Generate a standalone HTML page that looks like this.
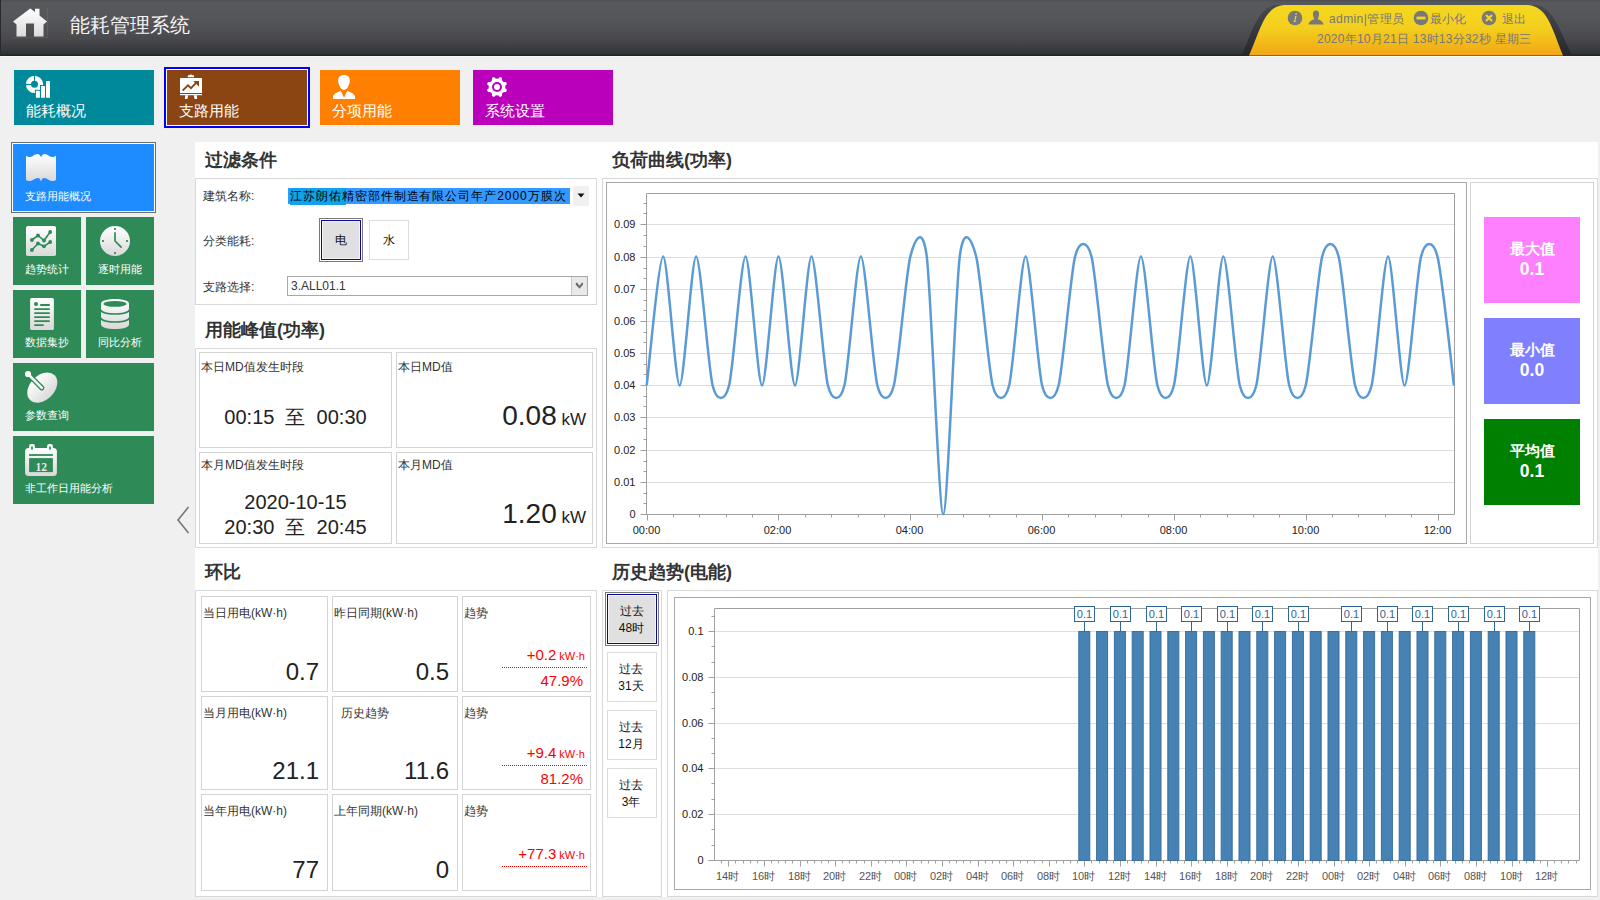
<!DOCTYPE html><html><head><meta charset="utf-8"><style>
*{box-sizing:border-box;margin:0;padding:0}
html,body{width:1600px;height:900px;overflow:hidden;background:#f0f0f0;font-family:"Liberation Sans",sans-serif;color:#333}
.a{position:absolute}
.hdr{left:0;top:0;width:1600px;height:56px;background:linear-gradient(#4f5054 0px,#58595d 3px,#56575b 15px,#4f5054 30px,#48484c 40px,#3b3d40 48px,#313436 54px,#222425 55px,#222425 56px)}
.ttl{left:70px;top:12px;font-size:20px;color:#f4f4f4;line-height:26px;letter-spacing:0px}
.tile{color:#fff;font-size:15px;line-height:18px}
.tile span{position:absolute;left:12px;bottom:5px;white-space:nowrap}
.st{color:#fff;font-size:11px;line-height:13px}
.st span{position:absolute;left:12px;bottom:9px;white-space:nowrap}
.pt{font-size:18px;font-weight:bold;color:#333;line-height:22px}
.bx{border:1px solid #d9d9d9;background:#fff}
.lb{font-size:12px;line-height:14px;color:#333;white-space:nowrap}
.card{border:1px solid #d4d4d4;background:#fff}
.red{color:#ff0000}
</style></head><body>
<div class="a hdr"></div>
<div class="a" style="left:0;top:0;width:1px;height:56px;background:#2a2a2a"></div>
<div class="a" style="left:0;top:56px;width:1600px;height:1px;background:#f8f8f8"></div>
<svg class="a" style="left:12px;top:8px" width="36" height="30" viewBox="0 0 36 30">
<defs><linearGradient id="hg" x1="0" y1="0" x2="0" y2="1"><stop offset="0" stop-color="#ffffff"/><stop offset="1" stop-color="#dcdcdc"/></linearGradient></defs>
<path d="M1,13.5 L18.3,0.5 L23,4 L23,0.8 L27.5,0.8 L27.5,7.6 L35,13.5 L31.5,16.5 L31.5,28.5 L22,28.5 L22,15.5 L14,15.5 L14,28.5 L4.5,28.5 L4.5,16.5 Z" fill="url(#hg)"/>
</svg>
<div class="a" style="left:47px;top:8px;width:1px;height:30px;background:rgba(255,255,255,0.07)"></div><div class="a" style="left:12px;top:37px;width:36px;height:1px;background:rgba(255,255,255,0.07)"></div>
<div class="a ttl">能耗管理系统</div>
<svg class="a" style="left:1238px;top:0" width="340" height="56" viewBox="0 0 340 56">
<defs><linearGradient id="yg" x1="0" y1="0" x2="0" y2="1"><stop offset="0" stop-color="#f5d81f"/><stop offset="0.45" stop-color="#f4cf1e"/><stop offset="1" stop-color="#f1a616"/></linearGradient>
<linearGradient id="sg" x1="0" y1="0" x2="0" y2="1"><stop offset="0" stop-color="#4a4b4f"/><stop offset="1" stop-color="#26272a"/></linearGradient></defs>
<path d="M4,55.5 C14,30 20,10 36,5 L300,5 C316,10 322,30 334,55.5 Z" fill="url(#sg)" />
<path d="M11,55.5 C24,25 27,7 46,5 L290,5 C309,7 313,25 325,55.5 Z" fill="url(#yg)"/>
</svg>
<svg class="a" style="left:1287px;top:10px" width="16" height="16" viewBox="0 0 16 16"><circle cx="8" cy="8" r="7.3" fill="#787878"/><path d="M8.6,3.3 l1.4,0 l-0.4,1.5 l-1.4,0z M8.2,6 l1.4,0 l-1.4,5.2 l1,0 l-0.2,0.8 l-2.6,0 l0.2,-0.8 l0.5,0 l1.1,-4.4 l-0.6,0z" fill="#f5d41f"/></svg>
<svg class="a" style="left:1308px;top:10px" width="16" height="15" viewBox="0 0 16 15"><path d="M8,0.5 C10.5,0.5 11.3,2.5 11,5 C10.8,7 10,8.5 9.6,9 C11.5,10 15,11 15.5,14.5 L0.5,14.5 C1,11 4.5,10 6.4,9 C6,8.5 5.2,7 5,5 C4.7,2.5 5.5,0.5 8,0.5Z" fill="#787878"/></svg>
<div class="a lb" style="left:1329px;top:12px;font-size:12px;color:#787878;line-height:14px;letter-spacing:0.4px">admin|管理员</div>
<svg class="a" style="left:1413px;top:10px" width="16" height="16" viewBox="0 0 16 16"><circle cx="8" cy="8" r="7.3" fill="#787878"/><rect x="3.5" y="6.6" width="9" height="2.8" fill="#f5d41f"/></svg>
<div class="a lb" style="left:1430px;top:12px;font-size:12px;color:#787878;line-height:14px">最小化</div>
<svg class="a" style="left:1481px;top:10px" width="16" height="16" viewBox="0 0 16 16"><circle cx="8" cy="8" r="7.3" fill="#787878"/><path d="M5,5 L11,11 M11,5 L5,11" stroke="#f5d41f" stroke-width="2.2"/></svg>
<div class="a lb" style="left:1502px;top:12px;font-size:12px;color:#787878;line-height:14px">退出</div>
<div class="a lb" style="left:1317px;top:32px;font-size:12px;color:#787878;line-height:14px;letter-spacing:0.25px">2020年10月21日 13时13分32秒 星期三</div>
<div class="a tile" style="left:14px;top:70px;width:140px;height:55px;background:#00889b"><span>能耗概况</span></div>
<div class="a" style="left:164px;top:67px;width:146px;height:61px;border:2px solid #0000ff;background:#fff"></div>
<div class="a tile" style="left:167px;top:70px;width:140px;height:55px;background:#8b4513"><span>支路用能</span></div>
<div class="a tile" style="left:320px;top:70px;width:140px;height:55px;background:#ff8000"><span>分项用能</span></div>
<div class="a tile" style="left:473px;top:70px;width:140px;height:55px;background:#bb00bb"><span>系统设置</span></div>
<div class="a" style="left:11px;top:142px;width:145px;height:71px;border:1px solid #6e6e6e;background:#fff"></div>
<div class="a st" style="left:13px;top:144px;width:141px;height:67px;background:#1e8cff"><span style="left:12px;bottom:8px">支路用能概况</span></div>
<div class="a st" style="left:13px;top:217px;width:68px;height:68px;background:#2e8b57"><span>趋势统计</span></div>
<div class="a st" style="left:86px;top:217px;width:68px;height:68px;background:#2e8b57"><span>逐时用能</span></div>
<div class="a st" style="left:13px;top:290px;width:68px;height:68px;background:#2e8b57"><span>数据集抄</span></div>
<div class="a st" style="left:86px;top:290px;width:68px;height:68px;background:#2e8b57"><span>同比分析</span></div>
<div class="a st" style="left:13px;top:363px;width:141px;height:68px;background:#2e8b57"><span>参数查询</span></div>
<div class="a st" style="left:13px;top:436px;width:141px;height:68px;background:#2e8b57"><span>非工作日用能分析</span></div>
<svg class="a" style="left:0;top:0" width="1600" height="900" viewBox="0 0 1600 900"><defs><linearGradient id="wg" x1="0" y1="0" x2="0" y2="1"><stop offset="0" stop-color="#ffffff"/><stop offset="1" stop-color="#d9d9d9"/></linearGradient></defs><path fill-rule="evenodd" fill="#fff" d="M34.5,75.7 A8.6,8.6 0 1 0 34.5,92.9 A8.6,8.6 0 1 0 34.5,75.7Z M34.5,80.8 A3.5,3.5 0 1 1 34.5,87.8 A3.5,3.5 0 1 1 34.5,80.8Z"/><rect x="34" y="75" width="1" height="6" fill="#00889b"/><rect x="25" y="83.9" width="6" height="1.2" fill="#00889b"/><rect x="34.9" y="89.8" width="6" height="9" fill="#00889b"/><rect x="40" y="85" width="6" height="14" fill="#00889b"/><rect x="35.9" y="90.8" width="4" height="7" rx="0.6" fill="#fff"/><rect x="41" y="86" width="4" height="11.8" rx="0.6" fill="#fff"/><rect x="46" y="81" width="4" height="16.8" rx="0.6" fill="#fff"/><rect x="187.8" y="75.3" width="6.2" height="1.9" fill="#fff"/><ellipse cx="190.9" cy="75.4" rx="1.4" ry="0.8" fill="#fff"/><rect x="180" y="78" width="22" height="15" rx="0.6" fill="#fff"/><rect x="180" y="94" width="22" height="1.2" fill="#fff"/><path d="M185.2,95.2 L188.2,95.2 L187.4,99 L184.9,99Z M193.8,95.2 L196.8,95.2 L197.1,99 L194.6,99Z" fill="#fff"/><path d="M182.6,90.6 L188,85.3 L191,88.1 L196.3,82.7" stroke="#8b4513" stroke-width="1.9" fill="none"/><path d="M193.2,81 L199,81 L199,86.8Z" fill="#8b4513"/><path fill="#fff" d="M344,75 C348.2,75 350,77.6 349.8,81 C349.7,83 349.3,84.6 348.5,85.6 C347.5,88.5 346,90 344,90 C342,90 340.5,88.5 339.5,85.6 C338.7,84.6 338.3,83 338.2,81 C338,77.6 339.8,75 344,75Z"/><path fill="#fff" d="M333,96.5 C333.5,94 338,91.8 340.8,91 L344,97.8 L347.2,91 C350,91.8 354.5,94 355,96.5 L355,99 L333,99Z"/><circle cx="497.0" cy="87.0" r="10.4" fill="#fff"/><circle cx="497.00" cy="76.00" r="2.8" fill="#bb00bb"/><circle cx="504.78" cy="79.22" r="2.8" fill="#bb00bb"/><circle cx="508.00" cy="87.00" r="2.8" fill="#bb00bb"/><circle cx="504.78" cy="94.78" r="2.8" fill="#bb00bb"/><circle cx="497.00" cy="98.00" r="2.8" fill="#bb00bb"/><circle cx="489.22" cy="94.78" r="2.8" fill="#bb00bb"/><circle cx="486.00" cy="87.00" r="2.8" fill="#bb00bb"/><circle cx="489.22" cy="79.22" r="2.8" fill="#bb00bb"/><circle cx="497.0" cy="87.0" r="5" fill="#bb00bb"/><circle cx="497.0" cy="87.0" r="3" fill="#fff"/><path fill="url(#wg)" d="M26,155.8 C28,157.5 31,157.3 33,156 C35,154.5 37,153.8 38.5,154.2 C40,154.7 40.5,156.5 41,157 C41.5,156.5 42,154.7 43.5,154.2 C45,153.8 47,154.5 49,156 C51,157.3 54,157.5 56,155.8 L56,180 C54,181.5 51,181.3 49,180 C47,178.5 45,177.8 43.5,178 C42,178.3 41.5,180.5 41,181.2 C40.5,180.5 40,178.3 38.5,178 C37,177.8 35,178.5 33,180 C31,181.3 28,181.5 26,180 Z"/><rect x="26" y="226" width="30" height="30" rx="1.8" fill="url(#wg)"/><g stroke="#2e8b57" stroke-width="1.6" fill="none"><path d="M31.9,240 L38,235.5 L44,240.5 L50.2,232"/><path d="M31.9,250 L38,243.5 L44,246.3 L50.2,242"/></g><g fill="#2e8b57"><circle cx="31.9" cy="240" r="1.9"/><circle cx="38" cy="235.5" r="1.9"/><circle cx="44" cy="240.5" r="1.9"/><circle cx="50.2" cy="232" r="1.9"/><circle cx="31.9" cy="250" r="1.9"/><circle cx="38" cy="243.5" r="1.9"/><circle cx="44" cy="246.3" r="1.9"/><circle cx="50.2" cy="242" r="1.9"/></g><circle cx="115" cy="241" r="15" fill="url(#wg)"/><g fill="#2e8b57" opacity="0.85"><rect x="114" y="228" width="2" height="2"/><rect x="114" y="252" width="2" height="2"/><rect x="102" y="240" width="2" height="2"/><rect x="126" y="240" width="2" height="2"/></g><path d="M115,232.3 L115,241 L121.6,247.6" stroke="#2e8b57" stroke-width="1.7" fill="none"/><rect x="30.1" y="298.1" width="23.8" height="31.8" rx="1.5" fill="url(#wg)"/><g fill="#2e8b57"><circle cx="36" cy="303.9" r="2"/><rect x="40.2" y="304.1" width="9.6" height="1.8" rx="0.5"/><rect x="34.2" y="308.3" width="15.6" height="1.8" rx="0.5"/><rect x="34.2" y="312.3" width="15.6" height="1.8" rx="0.5"/><rect x="34.2" y="316.3" width="15.6" height="1.8" rx="0.5"/><rect x="34.2" y="320.3" width="15.6" height="1.8" rx="0.5"/><rect x="34.2" y="324.3" width="9.6" height="1.8" rx="0.5"/></g><path fill="url(#wg)" d="M101,303.6 C101,297.6 129,297.6 129,303.6 L129,324.4 C129,330.6 101,330.6 101,324.4 Z"/><ellipse cx="115" cy="303.9" rx="11.6" ry="2.9" fill="#2e8b57"/><g stroke="#2e8b57" stroke-width="1.6" fill="none"><path d="M101,309.8 C101,315.4 129,315.4 129,309.8"/><path d="M101,317.8 C101,323.4 129,323.4 129,317.8"/></g><ellipse cx="42.3" cy="387.6" rx="17.4" ry="12.2" transform="rotate(-45 42.3 387.6)" fill="url(#wg)"/><path d="M28,374 L41.8,387.8" stroke="#2e8b57" stroke-width="5.2" stroke-linecap="round"/><path d="M28,374 L41.8,387.8" stroke="#f2f2f2" stroke-width="2.6" stroke-linecap="round"/><circle cx="28" cy="374" r="3.1" fill="#fafafa"/><rect x="25.1" y="447.9" width="31.8" height="28" rx="3.5" fill="url(#wg)"/><rect x="29.1" y="454.1" width="23.8" height="1.8" fill="#2e8b57"/><rect x="29.1" y="458.1" width="23.8" height="14" fill="#2e8b57"/><rect x="29.1" y="444.1" width="5.8" height="6.9" rx="2" fill="#f8f8f8"/><rect x="31.1" y="446.6" width="1.8" height="2.9" fill="#2e8b57"/><rect x="47.1" y="444.1" width="5.8" height="6.9" rx="2" fill="#f8f8f8"/><rect x="49.1" y="446.6" width="1.8" height="2.9" fill="#2e8b57"/><text x="41.2" y="470.5" font-size="11.5" font-weight="bold" text-anchor="middle" fill="#e8e8e8" font-family="Liberation Serif">12</text></svg>
<svg class="a" style="left:175px;top:505px" width="16" height="30" viewBox="0 0 16 30"><path d="M13.5,2 L3,15 L13.5,28" stroke="#777" stroke-width="1.6" fill="none"/></svg>
<div class="a" style="left:195px;top:142px;width:1403px;height:755px;background:#fff"></div>
<div class="a pt" style="left:205px;top:149px">过滤条件</div>
<div class="a pt" style="left:612px;top:149px">负荷曲线(功率)</div>
<div class="a pt" style="left:205px;top:319px">用能峰值(功率)</div>
<div class="a pt" style="left:205px;top:561px">环比</div>
<div class="a pt" style="left:612px;top:561px">历史趋势(电能)</div>
<div class="a bx" style="left:195px;top:178px;width:402px;height:127px"></div>
<div class="a lb" style="left:203px;top:189px">建筑名称:</div>
<div class="a lb" style="left:203px;top:234px">分类能耗:</div>
<div class="a lb" style="left:203px;top:280px">支路选择:</div>
<div class="a" style="left:288px;top:188px;width:282px;height:16px;background:#3399ff"></div>
<div class="a" style="left:290px;top:188px;width:56px;height:17px;background:#12a2ec"></div>
<div class="a lb" style="left:290px;top:189px;color:#000;letter-spacing:0.95px">江苏朗佑精密部件制造有限公司年产2000万膜次</div>
<div class="a" style="left:573px;top:186px;width:16px;height:20px;background:#f0f0f0"></div>
<svg class="a" style="left:577px;top:193px" width="8" height="5"><path d="M0.5,0.5 L7.5,0.5 L4,4.5Z" fill="#111"/></svg>
<div class="a" style="left:319px;top:218px;width:44px;height:44px;border:1px solid #7a7a7a;background:#fff"></div>
<div class="a lb" style="left:321px;top:220px;width:40px;height:40px;border:1px solid #0a0a9a;box-shadow:inset 0 0 0 1px #f4f4f4;background:#e0e0e0;text-align:center;line-height:38px;color:#111">电</div>
<div class="a lb" style="left:369px;top:220px;width:40px;height:40px;border:1px solid #dcdcdc;background:#fff;text-align:center;line-height:38px;color:#111">水</div>
<div class="a" style="left:287px;top:276px;width:301px;height:20px;border:1px solid #a8a8a8;background:#fff"></div>
<div class="a lb" style="left:291px;top:279px">3.ALL01.1</div>
<div class="a" style="left:571px;top:277px;width:16px;height:18px;border-left:1px solid #c8c8c8;background:#e9e9e9"></div>
<svg class="a" style="left:574px;top:281px" width="10" height="9"><path d="M1.8,1.8 L3.2,1.8 L5.5,4.8 L7.8,1.8 L9,1.8 L9,3.8 L5.5,7.8 L1.8,3.8Z" fill="#6e6e6e"/></svg>
<div class="a bx" style="left:195px;top:348px;width:402px;height:200px"></div>
<div class="a card" style="left:199px;top:352px;width:193px;height:96px"></div>
<div class="a card" style="left:396px;top:352px;width:197px;height:96px"></div>
<div class="a card" style="left:199px;top:452px;width:193px;height:92px"></div>
<div class="a card" style="left:396px;top:452px;width:197px;height:92px"></div>
<div class="a lb" style="left:201px;top:360px">本日MD值发生时段</div>
<div class="a lb" style="left:398px;top:360px">本日MD值</div>
<div class="a lb" style="left:201px;top:458px">本月MD值发生时段</div>
<div class="a lb" style="left:398px;top:458px">本月MD值</div>
<div class="a" style="left:199px;top:405px;width:193px;text-align:center;font-size:20px;line-height:24px;color:#222;white-space:nowrap">00:15 &nbsp;至 &nbsp;00:30</div>
<div class="a" style="left:199px;top:490px;width:193px;text-align:center;font-size:20px;line-height:24px;color:#222;white-space:nowrap">2020-10-15</div>
<div class="a" style="left:199px;top:515px;width:193px;text-align:center;font-size:20px;line-height:24px;color:#222;white-space:nowrap">20:30 &nbsp;至 &nbsp;20:45</div>
<div class="a" style="left:396px;top:399px;width:190px;text-align:right;white-space:nowrap;color:#222"><span style="font-size:28px;line-height:34px">0.08</span><span style="font-size:17px"> kW</span></div>
<div class="a" style="left:396px;top:497px;width:190px;text-align:right;white-space:nowrap;color:#222"><span style="font-size:28px;line-height:34px">1.20</span><span style="font-size:17px"> kW</span></div>
<div class="a bx" style="left:195px;top:590px;width:402px;height:307px"></div>
<div class="a card" style="left:201px;top:596px;width:127px;height:96px"></div>
<div class="a lb" style="left:203px;top:606px">当日用电(kW·h)</div>
<div class="a" style="left:201px;top:657px;width:118px;text-align:right;font-size:24px;line-height:30px;color:#222">0.7</div>
<div class="a card" style="left:332px;top:596px;width:126px;height:96px"></div>
<div class="a lb" style="left:334px;top:606px">昨日同期(kW·h)</div>
<div class="a" style="left:332px;top:657px;width:117px;text-align:right;font-size:24px;line-height:30px;color:#222">0.5</div>
<div class="a card" style="left:462px;top:596px;width:129px;height:96px"></div>
<div class="a lb" style="left:464px;top:606px">趋势</div>
<div class="a card" style="left:201px;top:696px;width:127px;height:94px"></div>
<div class="a lb" style="left:203px;top:706px">当月用电(kW·h)</div>
<div class="a" style="left:201px;top:756px;width:118px;text-align:right;font-size:24px;line-height:30px;color:#222">21.1</div>
<div class="a card" style="left:332px;top:696px;width:126px;height:94px"></div>
<div class="a lb" style="left:334px;top:706px">&nbsp;&nbsp;历史趋势</div>
<div class="a" style="left:332px;top:756px;width:117px;text-align:right;font-size:24px;line-height:30px;color:#222">11.6</div>
<div class="a card" style="left:462px;top:696px;width:129px;height:94px"></div>
<div class="a lb" style="left:464px;top:706px">趋势</div>
<div class="a card" style="left:201px;top:794px;width:127px;height:97px"></div>
<div class="a lb" style="left:203px;top:804px">当年用电(kW·h)</div>
<div class="a" style="left:201px;top:855px;width:118px;text-align:right;font-size:24px;line-height:30px;color:#222">77</div>
<div class="a card" style="left:332px;top:794px;width:126px;height:97px"></div>
<div class="a lb" style="left:334px;top:804px">上年同期(kW·h)</div>
<div class="a" style="left:332px;top:855px;width:117px;text-align:right;font-size:24px;line-height:30px;color:#222">0</div>
<div class="a card" style="left:462px;top:794px;width:129px;height:97px"></div>
<div class="a lb" style="left:464px;top:804px">趋势</div>
<div class="a red" style="left:462px;top:646px;width:123px;text-align:right;white-space:nowrap"><span style="font-size:15px">+0.2</span><span style="font-size:11px"> kW·h</span></div>
<div class="a" style="left:502px;top:667px;width:86px;height:1px;background:repeating-linear-gradient(90deg,#ff0000 0 1px,transparent 1px 2px)"></div>
<div class="a red" style="left:462px;top:672px;width:121px;text-align:right;font-size:15px;line-height:18px">47.9%</div>
<div class="a red" style="left:462px;top:744px;width:123px;text-align:right;white-space:nowrap"><span style="font-size:15px">+9.4</span><span style="font-size:11px"> kW·h</span></div>
<div class="a" style="left:502px;top:765px;width:86px;height:1px;background:repeating-linear-gradient(90deg,#ff0000 0 1px,transparent 1px 2px)"></div>
<div class="a red" style="left:462px;top:770px;width:121px;text-align:right;font-size:15px;line-height:18px">81.2%</div>
<div class="a red" style="left:462px;top:845px;width:123px;text-align:right;white-space:nowrap"><span style="font-size:15px">+77.3</span><span style="font-size:11px"> kW·h</span></div>
<div class="a" style="left:502px;top:866px;width:86px;height:1px;background:repeating-linear-gradient(90deg,#ff0000 0 1px,transparent 1px 2px)"></div>
<div class="a bx" style="left:602px;top:178px;width:996px;height:370px"></div>
<div class="a" style="left:606px;top:182px;width:861px;height:362px;border:1px solid #a8a8a8"></div>
<div class="a" style="left:1470px;top:182px;width:124px;height:362px;border:1px solid #d4d4d4"></div>
<div class="a" style="left:1484px;top:217px;width:96px;height:86px;background:#ff80ff;color:#fff;font-weight:bold;text-align:center"><div style="position:absolute;left:0;width:96px;top:23px;font-size:15px;line-height:18px">最大值</div><div style="position:absolute;left:0;width:96px;top:42px;font-size:17.5px;line-height:21px">0.1</div></div>
<div class="a" style="left:1484px;top:318px;width:96px;height:86px;background:#8080ff;color:#fff;font-weight:bold;text-align:center"><div style="position:absolute;left:0;width:96px;top:23px;font-size:15px;line-height:18px">最小值</div><div style="position:absolute;left:0;width:96px;top:42px;font-size:17.5px;line-height:21px">0.0</div></div>
<div class="a" style="left:1484px;top:419px;width:96px;height:86px;background:#008000;color:#fff;font-weight:bold;text-align:center"><div style="position:absolute;left:0;width:96px;top:23px;font-size:15px;line-height:18px">平均值</div><div style="position:absolute;left:0;width:96px;top:42px;font-size:17.5px;line-height:21px">0.1</div></div>
<div class="a bx" style="left:602px;top:590px;width:60px;height:307px"></div>
<div class="a bx" style="left:667px;top:590px;width:931px;height:307px"></div>
<div class="a" style="left:674px;top:597px;width:917px;height:293px;border:1px solid #a8a8a8"></div>
<svg class="a" style="left:0;top:0" width="1600" height="900" viewBox="0 0 1600 900"><line x1="646.5" y1="482.5" x2="1454.5" y2="482.5" stroke="#dedede" stroke-width="1"/><line x1="646.5" y1="450.5" x2="1454.5" y2="450.5" stroke="#dedede" stroke-width="1"/><line x1="646.5" y1="417.5" x2="1454.5" y2="417.5" stroke="#dedede" stroke-width="1"/><line x1="646.5" y1="385.5" x2="1454.5" y2="385.5" stroke="#dedede" stroke-width="1"/><line x1="646.5" y1="353.5" x2="1454.5" y2="353.5" stroke="#dedede" stroke-width="1"/><line x1="646.5" y1="321.5" x2="1454.5" y2="321.5" stroke="#dedede" stroke-width="1"/><line x1="646.5" y1="289.5" x2="1454.5" y2="289.5" stroke="#dedede" stroke-width="1"/><line x1="646.5" y1="257.5" x2="1454.5" y2="257.5" stroke="#dedede" stroke-width="1"/><line x1="646.5" y1="224.5" x2="1454.5" y2="224.5" stroke="#dedede" stroke-width="1"/><path d="M646.5,514.5 L646.5,193.5 L1454.5,193.5 L1454.5,514.5" stroke="#a0a0a0" fill="none"/><line x1="641.5" y1="514.5" x2="1454.5" y2="514.5" stroke="#a0a0a0"/><line x1="640.5" y1="514.5" x2="646.5" y2="514.5" stroke="#a0a0a0"/><text x="635.5" y="517.5" font-size="11" text-anchor="end" fill="#222" font-family="Liberation Sans">0</text><line x1="643.5" y1="503.5" x2="646.5" y2="503.5" stroke="#a0a0a0"/><line x1="643.5" y1="493.5" x2="646.5" y2="493.5" stroke="#a0a0a0"/><line x1="640.5" y1="482.5" x2="646.5" y2="482.5" stroke="#a0a0a0"/><text x="635.5" y="485.5" font-size="11" text-anchor="end" fill="#222" font-family="Liberation Sans">0.01</text><line x1="643.5" y1="471.5" x2="646.5" y2="471.5" stroke="#a0a0a0"/><line x1="643.5" y1="461.5" x2="646.5" y2="461.5" stroke="#a0a0a0"/><line x1="640.5" y1="450.5" x2="646.5" y2="450.5" stroke="#a0a0a0"/><text x="635.5" y="453.5" font-size="11" text-anchor="end" fill="#222" font-family="Liberation Sans">0.02</text><line x1="643.5" y1="439.5" x2="646.5" y2="439.5" stroke="#a0a0a0"/><line x1="643.5" y1="428.5" x2="646.5" y2="428.5" stroke="#a0a0a0"/><line x1="640.5" y1="417.5" x2="646.5" y2="417.5" stroke="#a0a0a0"/><text x="635.5" y="420.5" font-size="11" text-anchor="end" fill="#222" font-family="Liberation Sans">0.03</text><line x1="643.5" y1="406.5" x2="646.5" y2="406.5" stroke="#a0a0a0"/><line x1="643.5" y1="396.5" x2="646.5" y2="396.5" stroke="#a0a0a0"/><line x1="640.5" y1="385.5" x2="646.5" y2="385.5" stroke="#a0a0a0"/><text x="635.5" y="388.5" font-size="11" text-anchor="end" fill="#222" font-family="Liberation Sans">0.04</text><line x1="643.5" y1="374.5" x2="646.5" y2="374.5" stroke="#a0a0a0"/><line x1="643.5" y1="364.5" x2="646.5" y2="364.5" stroke="#a0a0a0"/><line x1="640.5" y1="353.5" x2="646.5" y2="353.5" stroke="#a0a0a0"/><text x="635.5" y="356.5" font-size="11" text-anchor="end" fill="#222" font-family="Liberation Sans">0.05</text><line x1="643.5" y1="342.5" x2="646.5" y2="342.5" stroke="#a0a0a0"/><line x1="643.5" y1="332.5" x2="646.5" y2="332.5" stroke="#a0a0a0"/><line x1="640.5" y1="321.5" x2="646.5" y2="321.5" stroke="#a0a0a0"/><text x="635.5" y="324.5" font-size="11" text-anchor="end" fill="#222" font-family="Liberation Sans">0.06</text><line x1="643.5" y1="310.5" x2="646.5" y2="310.5" stroke="#a0a0a0"/><line x1="643.5" y1="300.5" x2="646.5" y2="300.5" stroke="#a0a0a0"/><line x1="640.5" y1="289.5" x2="646.5" y2="289.5" stroke="#a0a0a0"/><text x="635.5" y="292.5" font-size="11" text-anchor="end" fill="#222" font-family="Liberation Sans">0.07</text><line x1="643.5" y1="278.5" x2="646.5" y2="278.5" stroke="#a0a0a0"/><line x1="643.5" y1="268.5" x2="646.5" y2="268.5" stroke="#a0a0a0"/><line x1="640.5" y1="257.5" x2="646.5" y2="257.5" stroke="#a0a0a0"/><text x="635.5" y="260.5" font-size="11" text-anchor="end" fill="#222" font-family="Liberation Sans">0.08</text><line x1="643.5" y1="246.5" x2="646.5" y2="246.5" stroke="#a0a0a0"/><line x1="643.5" y1="235.5" x2="646.5" y2="235.5" stroke="#a0a0a0"/><line x1="640.5" y1="224.5" x2="646.5" y2="224.5" stroke="#a0a0a0"/><text x="635.5" y="227.5" font-size="11" text-anchor="end" fill="#222" font-family="Liberation Sans">0.09</text><line x1="643.5" y1="213.5" x2="646.5" y2="213.5" stroke="#a0a0a0"/><line x1="643.5" y1="203.5" x2="646.5" y2="203.5" stroke="#a0a0a0"/><line x1="647.5" y1="514.5" x2="647.5" y2="520.5" stroke="#a0a0a0"/><text x="646.5" y="533.5" font-size="11" text-anchor="middle" fill="#222" font-family="Liberation Sans">00:00</text><line x1="673.5" y1="514.5" x2="673.5" y2="517.5" stroke="#a0a0a0"/><line x1="699.5" y1="514.5" x2="699.5" y2="517.5" stroke="#a0a0a0"/><line x1="726.5" y1="514.5" x2="726.5" y2="517.5" stroke="#a0a0a0"/><line x1="752.5" y1="514.5" x2="752.5" y2="517.5" stroke="#a0a0a0"/><line x1="778.5" y1="514.5" x2="778.5" y2="520.5" stroke="#a0a0a0"/><text x="777.5" y="533.5" font-size="11" text-anchor="middle" fill="#222" font-family="Liberation Sans">02:00</text><line x1="805.5" y1="514.5" x2="805.5" y2="517.5" stroke="#a0a0a0"/><line x1="831.5" y1="514.5" x2="831.5" y2="517.5" stroke="#a0a0a0"/><line x1="858.5" y1="514.5" x2="858.5" y2="517.5" stroke="#a0a0a0"/><line x1="884.5" y1="514.5" x2="884.5" y2="517.5" stroke="#a0a0a0"/><line x1="910.5" y1="514.5" x2="910.5" y2="520.5" stroke="#a0a0a0"/><text x="909.5" y="533.5" font-size="11" text-anchor="middle" fill="#222" font-family="Liberation Sans">04:00</text><line x1="937.5" y1="514.5" x2="937.5" y2="517.5" stroke="#a0a0a0"/><line x1="963.5" y1="514.5" x2="963.5" y2="517.5" stroke="#a0a0a0"/><line x1="989.5" y1="514.5" x2="989.5" y2="517.5" stroke="#a0a0a0"/><line x1="1016.5" y1="514.5" x2="1016.5" y2="517.5" stroke="#a0a0a0"/><line x1="1042.5" y1="514.5" x2="1042.5" y2="520.5" stroke="#a0a0a0"/><text x="1041.5" y="533.5" font-size="11" text-anchor="middle" fill="#222" font-family="Liberation Sans">06:00</text><line x1="1068.5" y1="514.5" x2="1068.5" y2="517.5" stroke="#a0a0a0"/><line x1="1095.5" y1="514.5" x2="1095.5" y2="517.5" stroke="#a0a0a0"/><line x1="1121.5" y1="514.5" x2="1121.5" y2="517.5" stroke="#a0a0a0"/><line x1="1148.5" y1="514.5" x2="1148.5" y2="517.5" stroke="#a0a0a0"/><line x1="1174.5" y1="514.5" x2="1174.5" y2="520.5" stroke="#a0a0a0"/><text x="1173.5" y="533.5" font-size="11" text-anchor="middle" fill="#222" font-family="Liberation Sans">08:00</text><line x1="1200.5" y1="514.5" x2="1200.5" y2="517.5" stroke="#a0a0a0"/><line x1="1227.5" y1="514.5" x2="1227.5" y2="517.5" stroke="#a0a0a0"/><line x1="1253.5" y1="514.5" x2="1253.5" y2="517.5" stroke="#a0a0a0"/><line x1="1279.5" y1="514.5" x2="1279.5" y2="517.5" stroke="#a0a0a0"/><line x1="1306.5" y1="514.5" x2="1306.5" y2="520.5" stroke="#a0a0a0"/><text x="1305.5" y="533.5" font-size="11" text-anchor="middle" fill="#222" font-family="Liberation Sans">10:00</text><line x1="1332.5" y1="514.5" x2="1332.5" y2="517.5" stroke="#a0a0a0"/><line x1="1358.5" y1="514.5" x2="1358.5" y2="517.5" stroke="#a0a0a0"/><line x1="1385.5" y1="514.5" x2="1385.5" y2="517.5" stroke="#a0a0a0"/><line x1="1411.5" y1="514.5" x2="1411.5" y2="517.5" stroke="#a0a0a0"/><line x1="1438.5" y1="514.5" x2="1438.5" y2="520.5" stroke="#a0a0a0"/><text x="1437.5" y="533.5" font-size="11" text-anchor="middle" fill="#222" font-family="Liberation Sans">12:00</text><path d="M646.70,385.46 C648.84,368.71 658.89,256.62 663.18,256.62 C667.46,256.62 675.37,385.46 679.65,385.46 C683.93,385.46 691.84,256.62 696.12,256.62 C700.41,256.62 708.32,368.71 712.60,385.46 C716.88,402.21 724.79,402.21 729.08,385.46 C733.36,368.71 741.27,256.62 745.55,256.62 C749.83,256.62 757.74,385.46 762.03,385.46 C766.31,385.46 774.22,256.62 778.50,256.62 C782.78,256.62 790.69,385.46 794.98,385.46 C799.26,385.46 807.17,256.62 811.45,256.62 C815.73,256.62 823.64,368.71 827.92,385.46 C832.21,402.21 840.12,402.21 844.40,385.46 C848.68,368.71 856.59,256.62 860.88,256.62 C865.16,256.62 873.07,368.71 877.35,385.46 C881.63,402.21 889.54,402.21 893.83,385.46 C898.11,368.71 906.02,273.37 910.30,256.62 C914.58,239.87 922.49,223.12 926.78,256.62 C931.06,290.12 938.97,514.30 943.25,514.30 C947.53,514.30 955.44,290.12 959.73,256.62 C964.01,223.12 971.92,239.87 976.20,256.62 C980.48,273.37 988.39,368.71 992.67,385.46 C996.96,402.21 1004.87,402.21 1009.15,385.46 C1013.43,368.71 1021.34,256.62 1025.62,256.62 C1029.91,256.62 1037.82,368.71 1042.10,385.46 C1046.38,402.21 1054.29,402.21 1058.58,385.46 C1062.86,368.71 1070.77,273.37 1075.05,256.62 C1079.33,239.87 1087.24,239.87 1091.53,256.62 C1095.81,273.37 1103.72,368.71 1108.00,385.46 C1112.28,402.21 1120.19,402.21 1124.47,385.46 C1128.76,368.71 1136.67,256.62 1140.95,256.62 C1145.23,256.62 1153.14,368.71 1157.42,385.46 C1161.71,402.21 1169.62,402.21 1173.90,385.46 C1178.18,368.71 1186.09,256.62 1190.38,256.62 C1194.66,256.62 1202.57,385.46 1206.85,385.46 C1211.13,385.46 1219.04,256.62 1223.32,256.62 C1227.61,256.62 1235.52,368.71 1239.80,385.46 C1244.08,402.21 1251.99,402.21 1256.28,385.46 C1260.56,368.71 1268.47,256.62 1272.75,256.62 C1277.03,256.62 1284.94,368.71 1289.22,385.46 C1293.51,402.21 1301.42,402.21 1305.70,385.46 C1309.98,368.71 1317.89,273.37 1322.17,256.62 C1326.46,239.87 1334.37,239.87 1338.65,256.62 C1342.93,273.37 1350.84,368.71 1355.12,385.46 C1359.41,402.21 1367.32,402.21 1371.60,385.46 C1375.88,368.71 1383.79,256.62 1388.07,256.62 C1392.36,256.62 1400.27,385.46 1404.55,385.46 C1408.83,385.46 1416.74,273.37 1421.03,256.62 C1425.31,239.87 1433.22,239.87 1437.50,256.62 C1441.78,273.37 1451.83,368.71 1453.97,385.46" stroke="#5b9bd5" stroke-width="2.5" fill="none"/><line x1="714.5" y1="814.5" x2="1579.5" y2="814.5" stroke="#dedede"/><line x1="714.5" y1="768.5" x2="1579.5" y2="768.5" stroke="#dedede"/><line x1="714.5" y1="723.5" x2="1579.5" y2="723.5" stroke="#dedede"/><line x1="714.5" y1="677.5" x2="1579.5" y2="677.5" stroke="#dedede"/><line x1="714.5" y1="631.5" x2="1579.5" y2="631.5" stroke="#dedede"/><path d="M714.5,860.5 L714.5,608.5 L1579.5,608.5 L1579.5,860.5" stroke="#a0a0a0" fill="none"/><line x1="708.5" y1="860.5" x2="1579.5" y2="860.5" stroke="#a0a0a0"/><line x1="708.5" y1="860.5" x2="714.5" y2="860.5" stroke="#a0a0a0"/><text x="703.5" y="863.5" font-size="11" text-anchor="end" fill="#222" font-family="Liberation Sans">0</text><line x1="711.5" y1="845.5" x2="714.5" y2="845.5" stroke="#a0a0a0"/><line x1="711.5" y1="829.5" x2="714.5" y2="829.5" stroke="#a0a0a0"/><line x1="708.5" y1="814.5" x2="714.5" y2="814.5" stroke="#a0a0a0"/><text x="703.5" y="817.5" font-size="11" text-anchor="end" fill="#222" font-family="Liberation Sans">0.02</text><line x1="711.5" y1="799.5" x2="714.5" y2="799.5" stroke="#a0a0a0"/><line x1="711.5" y1="783.5" x2="714.5" y2="783.5" stroke="#a0a0a0"/><line x1="708.5" y1="768.5" x2="714.5" y2="768.5" stroke="#a0a0a0"/><text x="703.5" y="771.5" font-size="11" text-anchor="end" fill="#222" font-family="Liberation Sans">0.04</text><line x1="711.5" y1="753.5" x2="714.5" y2="753.5" stroke="#a0a0a0"/><line x1="711.5" y1="738.5" x2="714.5" y2="738.5" stroke="#a0a0a0"/><line x1="708.5" y1="723.5" x2="714.5" y2="723.5" stroke="#a0a0a0"/><text x="703.5" y="726.5" font-size="11" text-anchor="end" fill="#222" font-family="Liberation Sans">0.06</text><line x1="711.5" y1="708.5" x2="714.5" y2="708.5" stroke="#a0a0a0"/><line x1="711.5" y1="692.5" x2="714.5" y2="692.5" stroke="#a0a0a0"/><line x1="708.5" y1="677.5" x2="714.5" y2="677.5" stroke="#a0a0a0"/><text x="703.5" y="680.5" font-size="11" text-anchor="end" fill="#222" font-family="Liberation Sans">0.08</text><line x1="711.5" y1="662.5" x2="714.5" y2="662.5" stroke="#a0a0a0"/><line x1="711.5" y1="646.5" x2="714.5" y2="646.5" stroke="#a0a0a0"/><line x1="708.5" y1="631.5" x2="714.5" y2="631.5" stroke="#a0a0a0"/><text x="703.5" y="634.5" font-size="11" text-anchor="end" fill="#222" font-family="Liberation Sans">0.1</text><line x1="711.5" y1="616.5" x2="714.5" y2="616.5" stroke="#a0a0a0"/><line x1="721.5" y1="860.5" x2="721.5" y2="863.5" stroke="#a0a0a0"/><line x1="728.5" y1="860.5" x2="728.5" y2="866.5" stroke="#a0a0a0"/><text x="727.5" y="879.5" font-size="11" text-anchor="middle" fill="#555" font-family="Liberation Sans">14时</text><line x1="735.5" y1="860.5" x2="735.5" y2="863.5" stroke="#a0a0a0"/><line x1="743.5" y1="860.5" x2="743.5" y2="863.5" stroke="#a0a0a0"/><line x1="750.5" y1="860.5" x2="750.5" y2="863.5" stroke="#a0a0a0"/><line x1="757.5" y1="860.5" x2="757.5" y2="863.5" stroke="#a0a0a0"/><line x1="764.5" y1="860.5" x2="764.5" y2="866.5" stroke="#a0a0a0"/><text x="763.5" y="879.5" font-size="11" text-anchor="middle" fill="#555" font-family="Liberation Sans">16时</text><line x1="771.5" y1="860.5" x2="771.5" y2="863.5" stroke="#a0a0a0"/><line x1="778.5" y1="860.5" x2="778.5" y2="863.5" stroke="#a0a0a0"/><line x1="785.5" y1="860.5" x2="785.5" y2="863.5" stroke="#a0a0a0"/><line x1="792.5" y1="860.5" x2="792.5" y2="863.5" stroke="#a0a0a0"/><line x1="800.5" y1="860.5" x2="800.5" y2="866.5" stroke="#a0a0a0"/><text x="799.5" y="879.5" font-size="11" text-anchor="middle" fill="#555" font-family="Liberation Sans">18时</text><line x1="807.5" y1="860.5" x2="807.5" y2="863.5" stroke="#a0a0a0"/><line x1="814.5" y1="860.5" x2="814.5" y2="863.5" stroke="#a0a0a0"/><line x1="821.5" y1="860.5" x2="821.5" y2="863.5" stroke="#a0a0a0"/><line x1="828.5" y1="860.5" x2="828.5" y2="863.5" stroke="#a0a0a0"/><line x1="835.5" y1="860.5" x2="835.5" y2="866.5" stroke="#a0a0a0"/><text x="834.5" y="879.5" font-size="11" text-anchor="middle" fill="#555" font-family="Liberation Sans">20时</text><line x1="842.5" y1="860.5" x2="842.5" y2="863.5" stroke="#a0a0a0"/><line x1="849.5" y1="860.5" x2="849.5" y2="863.5" stroke="#a0a0a0"/><line x1="856.5" y1="860.5" x2="856.5" y2="863.5" stroke="#a0a0a0"/><line x1="864.5" y1="860.5" x2="864.5" y2="863.5" stroke="#a0a0a0"/><line x1="871.5" y1="860.5" x2="871.5" y2="866.5" stroke="#a0a0a0"/><text x="870.5" y="879.5" font-size="11" text-anchor="middle" fill="#555" font-family="Liberation Sans">22时</text><line x1="878.5" y1="860.5" x2="878.5" y2="863.5" stroke="#a0a0a0"/><line x1="885.5" y1="860.5" x2="885.5" y2="863.5" stroke="#a0a0a0"/><line x1="892.5" y1="860.5" x2="892.5" y2="863.5" stroke="#a0a0a0"/><line x1="899.5" y1="860.5" x2="899.5" y2="863.5" stroke="#a0a0a0"/><line x1="906.5" y1="860.5" x2="906.5" y2="866.5" stroke="#a0a0a0"/><text x="905.5" y="879.5" font-size="11" text-anchor="middle" fill="#555" font-family="Liberation Sans">00时</text><line x1="913.5" y1="860.5" x2="913.5" y2="863.5" stroke="#a0a0a0"/><line x1="921.5" y1="860.5" x2="921.5" y2="863.5" stroke="#a0a0a0"/><line x1="928.5" y1="860.5" x2="928.5" y2="863.5" stroke="#a0a0a0"/><line x1="935.5" y1="860.5" x2="935.5" y2="863.5" stroke="#a0a0a0"/><line x1="942.5" y1="860.5" x2="942.5" y2="866.5" stroke="#a0a0a0"/><text x="941.5" y="879.5" font-size="11" text-anchor="middle" fill="#555" font-family="Liberation Sans">02时</text><line x1="949.5" y1="860.5" x2="949.5" y2="863.5" stroke="#a0a0a0"/><line x1="956.5" y1="860.5" x2="956.5" y2="863.5" stroke="#a0a0a0"/><line x1="963.5" y1="860.5" x2="963.5" y2="863.5" stroke="#a0a0a0"/><line x1="970.5" y1="860.5" x2="970.5" y2="863.5" stroke="#a0a0a0"/><line x1="978.5" y1="860.5" x2="978.5" y2="866.5" stroke="#a0a0a0"/><text x="977.5" y="879.5" font-size="11" text-anchor="middle" fill="#555" font-family="Liberation Sans">04时</text><line x1="985.5" y1="860.5" x2="985.5" y2="863.5" stroke="#a0a0a0"/><line x1="992.5" y1="860.5" x2="992.5" y2="863.5" stroke="#a0a0a0"/><line x1="999.5" y1="860.5" x2="999.5" y2="863.5" stroke="#a0a0a0"/><line x1="1006.5" y1="860.5" x2="1006.5" y2="863.5" stroke="#a0a0a0"/><line x1="1013.5" y1="860.5" x2="1013.5" y2="866.5" stroke="#a0a0a0"/><text x="1012.5" y="879.5" font-size="11" text-anchor="middle" fill="#555" font-family="Liberation Sans">06时</text><line x1="1020.5" y1="860.5" x2="1020.5" y2="863.5" stroke="#a0a0a0"/><line x1="1027.5" y1="860.5" x2="1027.5" y2="863.5" stroke="#a0a0a0"/><line x1="1034.5" y1="860.5" x2="1034.5" y2="863.5" stroke="#a0a0a0"/><line x1="1042.5" y1="860.5" x2="1042.5" y2="863.5" stroke="#a0a0a0"/><line x1="1049.5" y1="860.5" x2="1049.5" y2="866.5" stroke="#a0a0a0"/><text x="1048.5" y="879.5" font-size="11" text-anchor="middle" fill="#555" font-family="Liberation Sans">08时</text><line x1="1056.5" y1="860.5" x2="1056.5" y2="863.5" stroke="#a0a0a0"/><line x1="1063.5" y1="860.5" x2="1063.5" y2="863.5" stroke="#a0a0a0"/><line x1="1070.5" y1="860.5" x2="1070.5" y2="863.5" stroke="#a0a0a0"/><line x1="1077.5" y1="860.5" x2="1077.5" y2="863.5" stroke="#a0a0a0"/><line x1="1084.5" y1="860.5" x2="1084.5" y2="866.5" stroke="#a0a0a0"/><text x="1083.5" y="879.5" font-size="11" text-anchor="middle" fill="#555" font-family="Liberation Sans">10时</text><line x1="1091.5" y1="860.5" x2="1091.5" y2="863.5" stroke="#a0a0a0"/><line x1="1099.5" y1="860.5" x2="1099.5" y2="863.5" stroke="#a0a0a0"/><line x1="1106.5" y1="860.5" x2="1106.5" y2="863.5" stroke="#a0a0a0"/><line x1="1113.5" y1="860.5" x2="1113.5" y2="863.5" stroke="#a0a0a0"/><line x1="1120.5" y1="860.5" x2="1120.5" y2="866.5" stroke="#a0a0a0"/><text x="1119.5" y="879.5" font-size="11" text-anchor="middle" fill="#555" font-family="Liberation Sans">12时</text><line x1="1127.5" y1="860.5" x2="1127.5" y2="863.5" stroke="#a0a0a0"/><line x1="1134.5" y1="860.5" x2="1134.5" y2="863.5" stroke="#a0a0a0"/><line x1="1141.5" y1="860.5" x2="1141.5" y2="863.5" stroke="#a0a0a0"/><line x1="1148.5" y1="860.5" x2="1148.5" y2="863.5" stroke="#a0a0a0"/><line x1="1156.5" y1="860.5" x2="1156.5" y2="866.5" stroke="#a0a0a0"/><text x="1155.5" y="879.5" font-size="11" text-anchor="middle" fill="#555" font-family="Liberation Sans">14时</text><line x1="1163.5" y1="860.5" x2="1163.5" y2="863.5" stroke="#a0a0a0"/><line x1="1170.5" y1="860.5" x2="1170.5" y2="863.5" stroke="#a0a0a0"/><line x1="1177.5" y1="860.5" x2="1177.5" y2="863.5" stroke="#a0a0a0"/><line x1="1184.5" y1="860.5" x2="1184.5" y2="863.5" stroke="#a0a0a0"/><line x1="1191.5" y1="860.5" x2="1191.5" y2="866.5" stroke="#a0a0a0"/><text x="1190.5" y="879.5" font-size="11" text-anchor="middle" fill="#555" font-family="Liberation Sans">16时</text><line x1="1198.5" y1="860.5" x2="1198.5" y2="863.5" stroke="#a0a0a0"/><line x1="1205.5" y1="860.5" x2="1205.5" y2="863.5" stroke="#a0a0a0"/><line x1="1212.5" y1="860.5" x2="1212.5" y2="863.5" stroke="#a0a0a0"/><line x1="1220.5" y1="860.5" x2="1220.5" y2="863.5" stroke="#a0a0a0"/><line x1="1227.5" y1="860.5" x2="1227.5" y2="866.5" stroke="#a0a0a0"/><text x="1226.5" y="879.5" font-size="11" text-anchor="middle" fill="#555" font-family="Liberation Sans">18时</text><line x1="1234.5" y1="860.5" x2="1234.5" y2="863.5" stroke="#a0a0a0"/><line x1="1241.5" y1="860.5" x2="1241.5" y2="863.5" stroke="#a0a0a0"/><line x1="1248.5" y1="860.5" x2="1248.5" y2="863.5" stroke="#a0a0a0"/><line x1="1255.5" y1="860.5" x2="1255.5" y2="863.5" stroke="#a0a0a0"/><line x1="1262.5" y1="860.5" x2="1262.5" y2="866.5" stroke="#a0a0a0"/><text x="1261.5" y="879.5" font-size="11" text-anchor="middle" fill="#555" font-family="Liberation Sans">20时</text><line x1="1269.5" y1="860.5" x2="1269.5" y2="863.5" stroke="#a0a0a0"/><line x1="1277.5" y1="860.5" x2="1277.5" y2="863.5" stroke="#a0a0a0"/><line x1="1284.5" y1="860.5" x2="1284.5" y2="863.5" stroke="#a0a0a0"/><line x1="1291.5" y1="860.5" x2="1291.5" y2="863.5" stroke="#a0a0a0"/><line x1="1298.5" y1="860.5" x2="1298.5" y2="866.5" stroke="#a0a0a0"/><text x="1297.5" y="879.5" font-size="11" text-anchor="middle" fill="#555" font-family="Liberation Sans">22时</text><line x1="1305.5" y1="860.5" x2="1305.5" y2="863.5" stroke="#a0a0a0"/><line x1="1312.5" y1="860.5" x2="1312.5" y2="863.5" stroke="#a0a0a0"/><line x1="1319.5" y1="860.5" x2="1319.5" y2="863.5" stroke="#a0a0a0"/><line x1="1326.5" y1="860.5" x2="1326.5" y2="863.5" stroke="#a0a0a0"/><line x1="1334.5" y1="860.5" x2="1334.5" y2="866.5" stroke="#a0a0a0"/><text x="1333.5" y="879.5" font-size="11" text-anchor="middle" fill="#555" font-family="Liberation Sans">00时</text><line x1="1341.5" y1="860.5" x2="1341.5" y2="863.5" stroke="#a0a0a0"/><line x1="1348.5" y1="860.5" x2="1348.5" y2="863.5" stroke="#a0a0a0"/><line x1="1355.5" y1="860.5" x2="1355.5" y2="863.5" stroke="#a0a0a0"/><line x1="1362.5" y1="860.5" x2="1362.5" y2="863.5" stroke="#a0a0a0"/><line x1="1369.5" y1="860.5" x2="1369.5" y2="866.5" stroke="#a0a0a0"/><text x="1368.5" y="879.5" font-size="11" text-anchor="middle" fill="#555" font-family="Liberation Sans">02时</text><line x1="1376.5" y1="860.5" x2="1376.5" y2="863.5" stroke="#a0a0a0"/><line x1="1383.5" y1="860.5" x2="1383.5" y2="863.5" stroke="#a0a0a0"/><line x1="1390.5" y1="860.5" x2="1390.5" y2="863.5" stroke="#a0a0a0"/><line x1="1398.5" y1="860.5" x2="1398.5" y2="863.5" stroke="#a0a0a0"/><line x1="1405.5" y1="860.5" x2="1405.5" y2="866.5" stroke="#a0a0a0"/><text x="1404.5" y="879.5" font-size="11" text-anchor="middle" fill="#555" font-family="Liberation Sans">04时</text><line x1="1412.5" y1="860.5" x2="1412.5" y2="863.5" stroke="#a0a0a0"/><line x1="1419.5" y1="860.5" x2="1419.5" y2="863.5" stroke="#a0a0a0"/><line x1="1426.5" y1="860.5" x2="1426.5" y2="863.5" stroke="#a0a0a0"/><line x1="1433.5" y1="860.5" x2="1433.5" y2="863.5" stroke="#a0a0a0"/><line x1="1440.5" y1="860.5" x2="1440.5" y2="866.5" stroke="#a0a0a0"/><text x="1439.5" y="879.5" font-size="11" text-anchor="middle" fill="#555" font-family="Liberation Sans">06时</text><line x1="1447.5" y1="860.5" x2="1447.5" y2="863.5" stroke="#a0a0a0"/><line x1="1455.5" y1="860.5" x2="1455.5" y2="863.5" stroke="#a0a0a0"/><line x1="1462.5" y1="860.5" x2="1462.5" y2="863.5" stroke="#a0a0a0"/><line x1="1469.5" y1="860.5" x2="1469.5" y2="863.5" stroke="#a0a0a0"/><line x1="1476.5" y1="860.5" x2="1476.5" y2="866.5" stroke="#a0a0a0"/><text x="1475.5" y="879.5" font-size="11" text-anchor="middle" fill="#555" font-family="Liberation Sans">08时</text><line x1="1483.5" y1="860.5" x2="1483.5" y2="863.5" stroke="#a0a0a0"/><line x1="1490.5" y1="860.5" x2="1490.5" y2="863.5" stroke="#a0a0a0"/><line x1="1497.5" y1="860.5" x2="1497.5" y2="863.5" stroke="#a0a0a0"/><line x1="1504.5" y1="860.5" x2="1504.5" y2="863.5" stroke="#a0a0a0"/><line x1="1512.5" y1="860.5" x2="1512.5" y2="866.5" stroke="#a0a0a0"/><text x="1511.5" y="879.5" font-size="11" text-anchor="middle" fill="#555" font-family="Liberation Sans">10时</text><line x1="1519.5" y1="860.5" x2="1519.5" y2="863.5" stroke="#a0a0a0"/><line x1="1526.5" y1="860.5" x2="1526.5" y2="863.5" stroke="#a0a0a0"/><line x1="1533.5" y1="860.5" x2="1533.5" y2="863.5" stroke="#a0a0a0"/><line x1="1540.5" y1="860.5" x2="1540.5" y2="863.5" stroke="#a0a0a0"/><line x1="1547.5" y1="860.5" x2="1547.5" y2="866.5" stroke="#a0a0a0"/><text x="1546.5" y="879.5" font-size="11" text-anchor="middle" fill="#555" font-family="Liberation Sans">12时</text><line x1="1554.5" y1="860.5" x2="1554.5" y2="863.5" stroke="#a0a0a0"/><line x1="1561.5" y1="860.5" x2="1561.5" y2="863.5" stroke="#a0a0a0"/><line x1="1568.5" y1="860.5" x2="1568.5" y2="863.5" stroke="#a0a0a0"/><line x1="1576.5" y1="860.5" x2="1576.5" y2="863.5" stroke="#a0a0a0"/><rect x="1078.8" y="631.5" width="11" height="229" fill="#4682b4" stroke="#3a6f9f" stroke-width="1"/><rect x="1096.6" y="631.5" width="11" height="229" fill="#4682b4" stroke="#3a6f9f" stroke-width="1"/><rect x="1114.4" y="631.5" width="11" height="229" fill="#4682b4" stroke="#3a6f9f" stroke-width="1"/><rect x="1132.2" y="631.5" width="11" height="229" fill="#4682b4" stroke="#3a6f9f" stroke-width="1"/><rect x="1150.0" y="631.5" width="11" height="229" fill="#4682b4" stroke="#3a6f9f" stroke-width="1"/><rect x="1167.8" y="631.5" width="11" height="229" fill="#4682b4" stroke="#3a6f9f" stroke-width="1"/><rect x="1185.6" y="631.5" width="11" height="229" fill="#4682b4" stroke="#3a6f9f" stroke-width="1"/><rect x="1203.4" y="631.5" width="11" height="229" fill="#4682b4" stroke="#3a6f9f" stroke-width="1"/><rect x="1221.2" y="631.5" width="11" height="229" fill="#4682b4" stroke="#3a6f9f" stroke-width="1"/><rect x="1239.0" y="631.5" width="11" height="229" fill="#4682b4" stroke="#3a6f9f" stroke-width="1"/><rect x="1256.8" y="631.5" width="11" height="229" fill="#4682b4" stroke="#3a6f9f" stroke-width="1"/><rect x="1274.6" y="631.5" width="11" height="229" fill="#4682b4" stroke="#3a6f9f" stroke-width="1"/><rect x="1292.4" y="631.5" width="11" height="229" fill="#4682b4" stroke="#3a6f9f" stroke-width="1"/><rect x="1310.2" y="631.5" width="11" height="229" fill="#4682b4" stroke="#3a6f9f" stroke-width="1"/><rect x="1328.0" y="631.5" width="11" height="229" fill="#4682b4" stroke="#3a6f9f" stroke-width="1"/><rect x="1345.8" y="631.5" width="11" height="229" fill="#4682b4" stroke="#3a6f9f" stroke-width="1"/><rect x="1363.6" y="631.5" width="11" height="229" fill="#4682b4" stroke="#3a6f9f" stroke-width="1"/><rect x="1381.4" y="631.5" width="11" height="229" fill="#4682b4" stroke="#3a6f9f" stroke-width="1"/><rect x="1399.2" y="631.5" width="11" height="229" fill="#4682b4" stroke="#3a6f9f" stroke-width="1"/><rect x="1417.0" y="631.5" width="11" height="229" fill="#4682b4" stroke="#3a6f9f" stroke-width="1"/><rect x="1434.8" y="631.5" width="11" height="229" fill="#4682b4" stroke="#3a6f9f" stroke-width="1"/><rect x="1452.6" y="631.5" width="11" height="229" fill="#4682b4" stroke="#3a6f9f" stroke-width="1"/><rect x="1470.4" y="631.5" width="11" height="229" fill="#4682b4" stroke="#3a6f9f" stroke-width="1"/><rect x="1488.2" y="631.5" width="11" height="229" fill="#4682b4" stroke="#3a6f9f" stroke-width="1"/><rect x="1506.0" y="631.5" width="11" height="229" fill="#4682b4" stroke="#3a6f9f" stroke-width="1"/><rect x="1523.8" y="631.5" width="11" height="229" fill="#4682b4" stroke="#3a6f9f" stroke-width="1"/><line x1="1084.5" y1="621" x2="1084.5" y2="631" stroke="#2f6496"/><rect x="1074.5" y="606.5" width="20" height="15" fill="#fff" stroke="#2f6496"/><text x="1084.5" y="618" font-size="11" text-anchor="middle" fill="#2f6496" font-family="Liberation Sans">0.1</text><line x1="1120.5" y1="621" x2="1120.5" y2="631" stroke="#2f6496"/><rect x="1110.5" y="606.5" width="20" height="15" fill="#fff" stroke="#2f6496"/><text x="1120.5" y="618" font-size="11" text-anchor="middle" fill="#2f6496" font-family="Liberation Sans">0.1</text><line x1="1156.5" y1="621" x2="1156.5" y2="631" stroke="#2f6496"/><rect x="1146.5" y="606.5" width="20" height="15" fill="#fff" stroke="#2f6496"/><text x="1156.5" y="618" font-size="11" text-anchor="middle" fill="#2f6496" font-family="Liberation Sans">0.1</text><line x1="1191.5" y1="621" x2="1191.5" y2="631" stroke="#2f6496"/><rect x="1181.5" y="606.5" width="20" height="15" fill="#fff" stroke="#2f6496"/><text x="1191.5" y="618" font-size="11" text-anchor="middle" fill="#2f6496" font-family="Liberation Sans">0.1</text><line x1="1227.5" y1="621" x2="1227.5" y2="631" stroke="#2f6496"/><rect x="1217.5" y="606.5" width="20" height="15" fill="#fff" stroke="#2f6496"/><text x="1227.5" y="618" font-size="11" text-anchor="middle" fill="#2f6496" font-family="Liberation Sans">0.1</text><line x1="1262.5" y1="621" x2="1262.5" y2="631" stroke="#2f6496"/><rect x="1252.5" y="606.5" width="20" height="15" fill="#fff" stroke="#2f6496"/><text x="1262.5" y="618" font-size="11" text-anchor="middle" fill="#2f6496" font-family="Liberation Sans">0.1</text><line x1="1298.5" y1="621" x2="1298.5" y2="631" stroke="#2f6496"/><rect x="1288.5" y="606.5" width="20" height="15" fill="#fff" stroke="#2f6496"/><text x="1298.5" y="618" font-size="11" text-anchor="middle" fill="#2f6496" font-family="Liberation Sans">0.1</text><line x1="1351.5" y1="621" x2="1351.5" y2="631" stroke="#2f6496"/><rect x="1341.5" y="606.5" width="20" height="15" fill="#fff" stroke="#2f6496"/><text x="1351.5" y="618" font-size="11" text-anchor="middle" fill="#2f6496" font-family="Liberation Sans">0.1</text><line x1="1387.5" y1="621" x2="1387.5" y2="631" stroke="#2f6496"/><rect x="1377.5" y="606.5" width="20" height="15" fill="#fff" stroke="#2f6496"/><text x="1387.5" y="618" font-size="11" text-anchor="middle" fill="#2f6496" font-family="Liberation Sans">0.1</text><line x1="1422.5" y1="621" x2="1422.5" y2="631" stroke="#2f6496"/><rect x="1412.5" y="606.5" width="20" height="15" fill="#fff" stroke="#2f6496"/><text x="1422.5" y="618" font-size="11" text-anchor="middle" fill="#2f6496" font-family="Liberation Sans">0.1</text><line x1="1458.5" y1="621" x2="1458.5" y2="631" stroke="#2f6496"/><rect x="1448.5" y="606.5" width="20" height="15" fill="#fff" stroke="#2f6496"/><text x="1458.5" y="618" font-size="11" text-anchor="middle" fill="#2f6496" font-family="Liberation Sans">0.1</text><line x1="1494.5" y1="621" x2="1494.5" y2="631" stroke="#2f6496"/><rect x="1484.5" y="606.5" width="20" height="15" fill="#fff" stroke="#2f6496"/><text x="1494.5" y="618" font-size="11" text-anchor="middle" fill="#2f6496" font-family="Liberation Sans">0.1</text><line x1="1529.5" y1="621" x2="1529.5" y2="631" stroke="#2f6496"/><rect x="1519.5" y="606.5" width="20" height="15" fill="#fff" stroke="#2f6496"/><text x="1529.5" y="618" font-size="11" text-anchor="middle" fill="#2f6496" font-family="Liberation Sans">0.1</text></svg>
<div class="a" style="left:605px;top:592px;width:54px;height:54px;border:1px solid #7a7a7a;background:#fff"></div>
<div class="a lb" style="left:607px;top:594px;width:50px;height:50px;border:1px solid #0a0a9a;box-shadow:inset 0 0 0 1px #f4f4f4;background:#e0e0e0;text-align:center;line-height:17px;padding-top:8px;padding-right:1px;color:#111">过去<br>48时</div>
<div class="a lb" style="left:607px;top:652px;width:50px;height:50px;border:1px solid #dcdcdc;background:#fff;text-align:center;line-height:17px;padding-top:8px;padding-right:2px;color:#111">过去<br>31天</div>
<div class="a lb" style="left:607px;top:710px;width:50px;height:50px;border:1px solid #dcdcdc;background:#fff;text-align:center;line-height:17px;padding-top:8px;padding-right:2px;color:#111">过去<br>12月</div>
<div class="a lb" style="left:607px;top:768px;width:50px;height:50px;border:1px solid #dcdcdc;background:#fff;text-align:center;line-height:17px;padding-top:8px;padding-right:2px;color:#111">过去<br>3年</div>
</body></html>
